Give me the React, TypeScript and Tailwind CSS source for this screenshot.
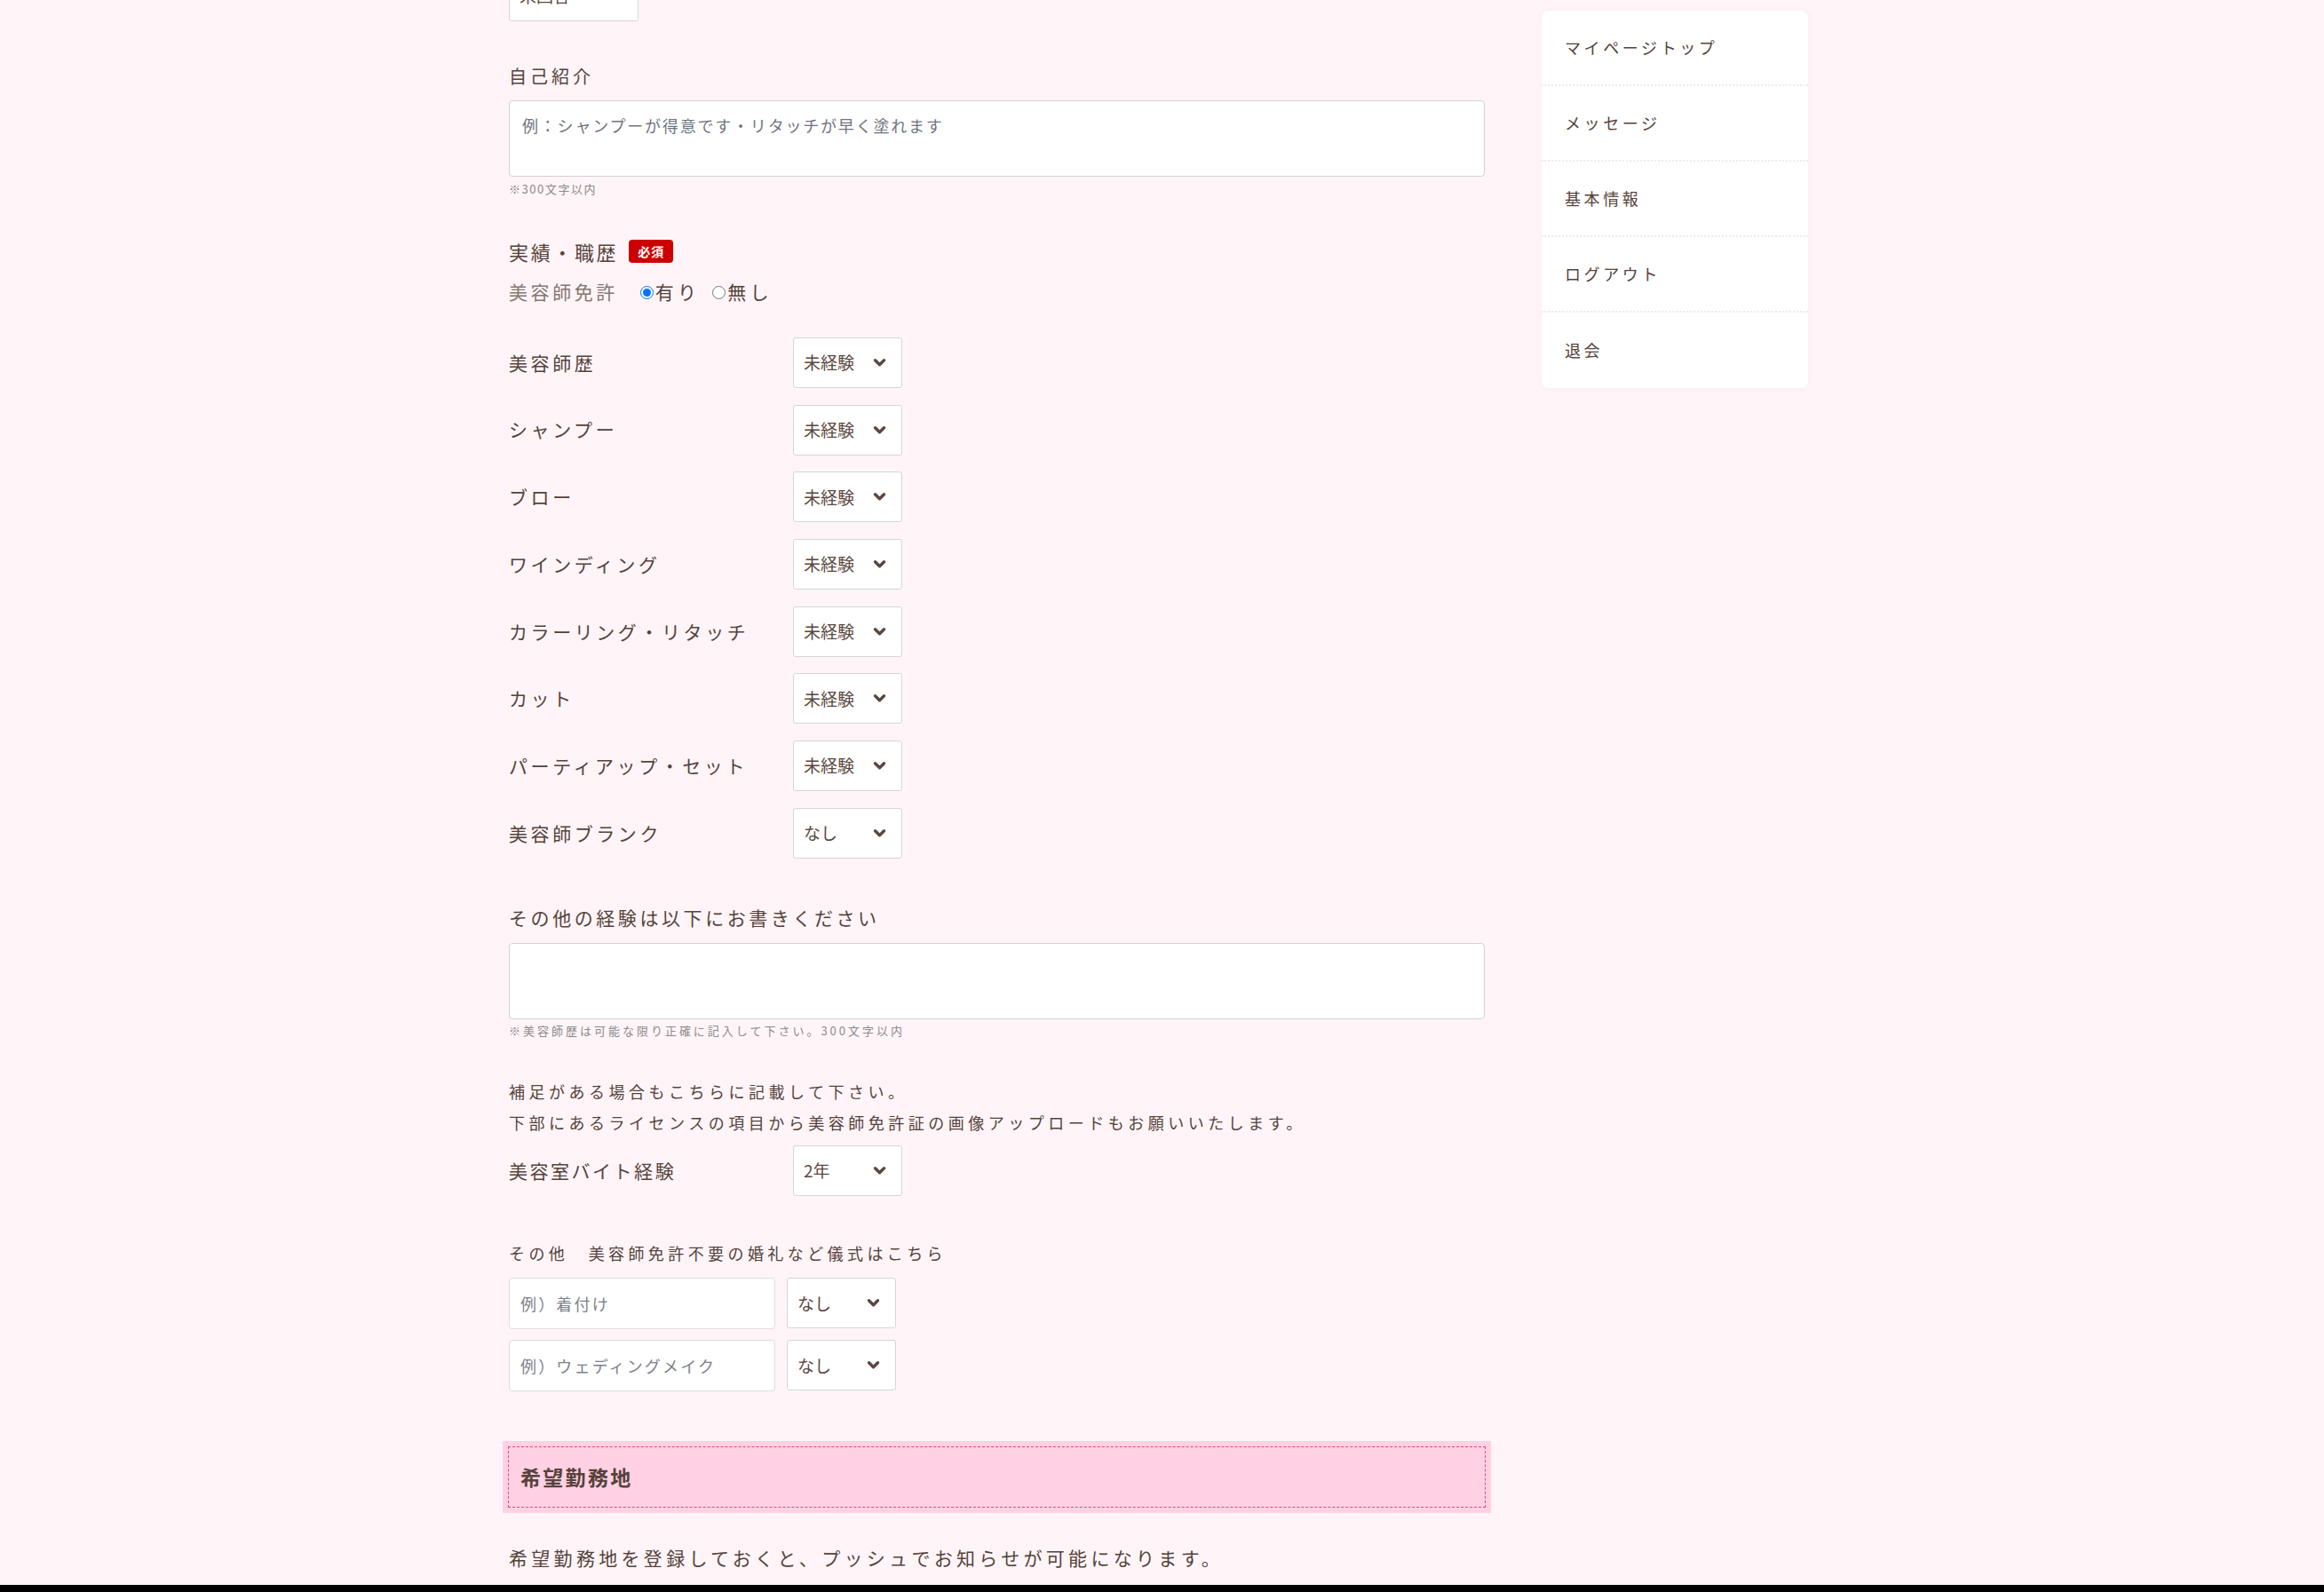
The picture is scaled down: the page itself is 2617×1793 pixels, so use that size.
const font = "font-['Noto_Sans_CJK_JP','Noto_Sans',sans-serif]";

function Chevron() {
  return (
    <svg width="15" height="11" viewBox="0 0 15 11" className="shrink-0">
      <polyline
        points="2.5,2.8 7.5,7.8 12.5,2.8"
        fill="none"
        stroke="#5b4740"
        strokeWidth="3.4"
        strokeLinecap="round"
        strokeLinejoin="round"
      />
    </svg>
  );
}

function FakeSelect({ value, wide }: { value: string; wide?: boolean }) {
  return (
    <div
      className={`${wide ? "w-[146px]" : "w-[123px]"} h-[57px] shrink-0 bg-white border border-[#d4d4dc] rounded-[3px] flex items-center justify-between pl-[11px] pr-[17px] text-[19px] text-[#5b4740]`}
    >
      <span>{value}</span>
      <Chevron />
    </div>
  );
}

const skills = [
  { label: "美容師歴", value: "未経験" },
  { label: "シャンプー", value: "未経験" },
  { label: "ブロー", value: "未経験" },
  { label: "ワインディング", value: "未経験" },
  { label: "カラーリング・リタッチ", value: "未経験" },
  { label: "カット", value: "未経験" },
  { label: "パーティアップ・セット", value: "未経験" },
  { label: "美容師ブランク", value: "なし" },
];

const menu = ["マイページトップ", "メッセージ", "基本情報", "ログアウト", "退会"];

export default function App() {
  return (
    <div className={`min-h-screen bg-[#fff5f8] text-[#56423b] ${font}`}>
      <div className="mx-auto w-[1471px] pr-[8px] flex gap-[64px] items-start">
        {/* フォーム */}
        <div className="w-[1099px] flex flex-col pb-[80px]">
          <div className="mt-[-33px]">
            <FakeSelect value="未回答" wide />
          </div>

          {/* 自己紹介 */}
          <h3 className="mt-[47px] text-[20px] leading-[30px] tracking-[0.2em]">自己紹介</h3>
          <textarea
            placeholder="例：シャンプーが得意です・リタッチが早く塗れます"
            className="mt-[12px] h-[86px] w-full resize-none bg-white border border-[#cfd3da] rounded-[4px] px-[14px] py-[14px] text-[18px] tracking-[0.1em] placeholder-[#6f7480] focus:outline-none"
          />
          <p className="mt-[5px] text-[13px] leading-[18px] tracking-[0.12em] text-[#8a8a8a]">※300文字以内</p>

          {/* 実績・職歴 */}
          <div className="mt-[46px] h-[30px] flex items-center gap-[12px]">
            <span className="text-[22px] tracking-[0.12em]">実績・職歴</span>
            <span className="h-[26px] px-[10px] rounded-[4px] bg-[#cc0000] text-white text-[14px] font-bold flex items-center tracking-[0.08em]">
              必須
            </span>
          </div>
          <div className="mt-[16px] h-[30px] flex items-center text-[21px]">
            <span className="text-[#85766f] tracking-[0.17em]">美容師免許</span>
            <label className="ml-[25px] flex items-center">
              <input type="radio" name="license" defaultChecked className="w-[15px] h-[15px] m-0" />
              <span className="ml-[2px] tracking-[0.2em]">有り</span>
            </label>
            <label className="ml-[14px] flex items-center">
              <input type="radio" name="license" className="w-[15px] h-[15px] m-0" />
              <span className="ml-[2px] tracking-[0.2em]">無し</span>
            </label>
          </div>

          <div className="mt-[36px] flex flex-col gap-[18.7px]">
            {skills.map((s) => (
              <div key={s.label} className="flex items-center">
                <span className="w-[320px] shrink-0 text-[21px] tracking-[0.17em]">{s.label}</span>
                <FakeSelect value={s.value} />
              </div>
            ))}
          </div>

          {/* その他の経験 */}
          <h3 className="mt-[51px] text-[21px] leading-[30px] tracking-[0.17em]">その他の経験は以下にお書きください</h3>
          <textarea className="mt-[14px] h-[86px] w-full resize-none bg-white border border-[#cfd3da] rounded-[4px] focus:outline-none" />
          <p className="mt-[4px] text-[13px] leading-[18px] tracking-[0.23em] text-[#8a8a8a]">
            ※美容師歴は可能な限り正確に記入して下さい。300文字以内
          </p>

          <p className="mt-[42px] text-[18px] leading-[35px] tracking-[0.25em]">
            補足がある場合もこちらに記載して下さい。
            <br />
            下部にあるライセンスの項目から美容師免許証の画像アップロードもお願いいたします。
          </p>

          <div className="mt-[8px] flex items-center">
            <span className="w-[320px] shrink-0 text-[21px] tracking-[0.12em]">美容室バイト経験</span>
            <FakeSelect value="2年" />
          </div>

          {/* その他 */}
          <p className="mt-[50px] text-[18px] leading-[28px] tracking-[0.245em]">その他　美容師免許不要の婚礼など儀式はこちら</p>
          <div className="mt-[14px] flex flex-col gap-[12px]">
            {["例）着付け", "例）ウェディングメイク"].map((p) => (
              <div key={p} className="flex items-center gap-[13px]">
                <input
                  placeholder={p}
                  className="w-[300px] h-[58px] bg-white border border-[#dcdce2] rounded-[4px] px-[12px] text-[18px] tracking-[0.12em] placeholder-[#7d818b] focus:outline-none"
                />
                <FakeSelect value="なし" />
              </div>
            ))}
          </div>

          {/* 希望勤務地 */}
          <div className="mt-[56px] mx-[-7px] bg-[#ffd1e3] p-[6px]">
            <div className="h-[69px] border border-dashed border-[#e2457f] flex items-center pl-[13px]">
              <h2 className="text-[23px] font-bold tracking-[0.1em]">希望勤務地</h2>
            </div>
          </div>
          <p className="mt-[35px] text-[21px] leading-[30px] tracking-[0.205em]">
            希望勤務地を登録しておくと、プッシュでお知らせが可能になります。
          </p>
        </div>

        {/* サイドメニュー */}
        <nav className="mt-[12px] w-[300px] shrink-0 bg-white rounded-[8px] shadow-[0_0_8px_rgba(0,0,0,0.04)] overflow-hidden">
          {menu.map((m, i) => (
            <a
              key={m}
              href="#"
              className={`h-[85px] flex items-center pl-[26px] text-[18px] tracking-[0.2em] text-[#56423b] ${
                i < menu.length - 1 ? "border-b-2 border-dotted border-[#efeaea]" : ""
              }`}
            >
              {m}
            </a>
          ))}
        </nav>
      </div>
      <div className="fixed bottom-0 left-0 right-0 h-[8px] bg-black" />
    </div>
  );
}
